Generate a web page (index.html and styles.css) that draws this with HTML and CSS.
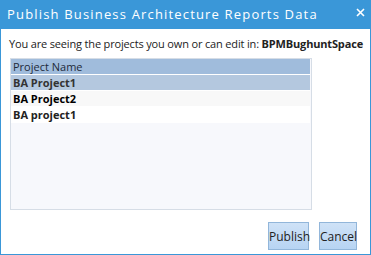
FILE: index.html
```html
<!DOCTYPE html>
<html>
<head>
<meta charset="utf-8">
<link rel="stylesheet" href="styles.css">
</head>
<body>
<div class="dialog">
  <div class="titlebar">
    <span class="title">Publish Business Architecture Reports Data</span>
    <svg class="close" width="9" height="9" viewBox="0 0 9 9"><path d="M1 1 L8 8 M8 1 L1 8" stroke="#fff" stroke-width="1.6" stroke-linecap="butt"/></svg>
  </div>
  <div class="content">
    <p class="intro">You are seeing the projects you own or can edit in: <b>BPMBughuntSpace</b></p>
    <div class="grid">
      <div class="row head">Project Name</div>
      <div class="row sel">BA Project1</div>
      <div class="row alt">BA Project2</div>
      <div class="row">BA project1</div>
    </div>
    <div class="buttons">
      <button class="btn">Publish</button>
      <button class="btn">Cancel</button>
    </div>
  </div>
</div>
</body>
</html>
```
FILE: styles.css
```css
html, body { margin: 0; padding: 0; background: #fff; }
.dialog {
  width: 371px; height: 255px; box-sizing: border-box;
  border: 1px solid #3a97d8; border-top: none;
  display: flex; flex-direction: column;
  font-family: "Open Sans", sans-serif;
}
.titlebar {
  height: 29px; background: #3a97d8; margin: 0 -1px;
  display: flex; align-items: center; justify-content: space-between;
  padding: 0 6px 0 7px; box-sizing: border-box;
}
.title {
  color: #fff; font-size: 13px; letter-spacing: 1.17px; line-height: 16px;
  font-family: "Open Sans", sans-serif; margin-top: -2px; white-space: nowrap;
}
.close { margin-top: -5px; }
.content { flex: 1; display: flex; flex-direction: column; padding: 0 0 0 8px; }
.intro {
  margin: 8px 0 0; font-size: 11px; line-height: 14px; color: #222;
  font-family: "Open Sans", sans-serif; white-space: nowrap; letter-spacing: -0.16px;
}
.intro b { font-weight: bold; }
.grid {
  margin: 7px 0 0 1px; width: 302px; height: 152px; box-sizing: border-box;
  border: 1px solid #d6dde6;
  background: linear-gradient(#fff, #fff) no-repeat 0 0 / 299px 64px, #f7f8fc;
  display: flex; flex-direction: column; gap: 1px; padding-bottom: 1px;
}
.row {
  height: 15px; line-height: 15px; padding-left: 2px; font-size: 11px;
  font-weight: bold; color: #222; background: #fff;
  width: 299px; box-sizing: border-box;
}
.row.head { font-weight: normal; background: #a0bcdc; color: #1e2a3a; }
.row.sel { background: #b4c8df; color: #333; }
.row.alt { background: #f8f8f8; color: #000; }
.buttons {
  margin-top: auto; display: flex; justify-content: flex-end; gap: 10px;
  padding: 0 13px 4px 0;
}
.btn {
  width: 41px; height: 28px; box-sizing: border-box; padding: 0;
  border: 1px solid #92b6da; background: linear-gradient(#cfe2f7, #b7d4f3);
  font-family: "Open Sans", sans-serif; font-size: 12px; color: #222;
}
.btn + .btn { width: 38px; }
```
